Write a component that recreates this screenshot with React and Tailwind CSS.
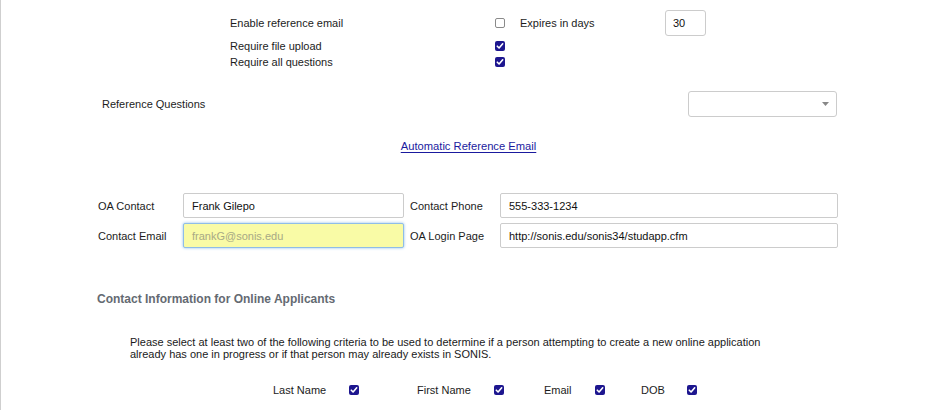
import React from "react";

function Check({ checked }) {
  if (checked) {
    return (
      <span className="inline-flex w-[10px] h-[10px] rounded-[2px] bg-[#1d168f] items-center justify-center shrink-0">
        <svg width="8" height="8" viewBox="0 0 8 8">
          <path d="M1.3 4.2 L3.1 6 L6.7 1.8" fill="none" stroke="#ffffff" strokeWidth="1.6" strokeLinecap="round" strokeLinejoin="round" />
        </svg>
      </span>
    );
  }
  return <span className="inline-block w-[10px] h-[10px] rounded-[2px] border border-[#8a8a8a] bg-white shrink-0" />;
}

export default function App() {
  return (
    <div
      className="w-[936px] h-[410px] bg-white border-l border-[#cfcfcf] overflow-hidden text-[11px] text-[#1c1c1c] leading-[14px]"
      style={{ fontFamily: '"Liberation Sans", Arial, sans-serif' }}
    >
      {/* Top options */}
      <div className="pt-[10px] pl-[229px]">
        <div className="flex items-center h-[26px]">
          <span className="w-[265px]">Enable reference email</span>
          <Check checked={false} />
          <span className="ml-[15px] w-[145px]">Expires in days</span>
          <div className="w-[41px] h-[26px] border border-[#cccccc] rounded-[3px] flex items-center pl-[7px] text-[#111]">30</div>
        </div>
        <div className="flex items-center h-[16px] mt-[2px]">
          <span className="w-[265px]">Require file upload</span>
          <Check checked={true} />
        </div>
        <div className="flex items-center h-[16px]">
          <span className="w-[265px]">Require all questions</span>
          <Check checked={true} />
        </div>
      </div>

      {/* Reference Questions */}
      <div className="flex items-center h-[26px] mt-[21px] pl-[101px]">
        <span className="w-[586px]">Reference Questions</span>
        <div className="w-[149px] h-[26px] border border-[#cccccc] rounded-[3px] bg-white flex items-center justify-end pr-[7px]">
          <svg width="7" height="4" viewBox="0 0 7 4">
            <path d="M0 0 L7 0 L3.5 4 Z" fill="#888888" />
          </svg>
        </div>
      </div>

      {/* Link */}
      <div className="flex justify-center mt-[22px]">
        <a className="text-[#1a1a9e] underline underline-offset-2 text-[11.2px]">Automatic Reference Email</a>
      </div>

      {/* Contact grid */}
      <div className="mt-[40px] pl-[97px] flex flex-col gap-[5px]">
        <div className="flex items-center">
          <span className="w-[85px]">OA Contact</span>
          <div className="w-[221px] h-[25px] border border-[#cccccc] rounded-[2px] flex items-center pl-[8px] text-[#111]">Frank Gilepo</div>
          <span className="ml-[6px] w-[90px]">Contact Phone</span>
          <div className="w-[338px] h-[25px] border border-[#cccccc] rounded-[2px] flex items-center pl-[8px] text-[#111]">555-333-1234</div>
        </div>
        <div className="flex items-center">
          <span className="w-[85px]">Contact Email</span>
          <div className="w-[221px] h-[25px] border border-[#8fbde8] rounded-[2px] bg-[#f9fba6] shadow-[0_0_3px_#8fbde8] flex items-center pl-[8px] text-[#a7a985]">frankG@sonis.edu</div>
          <span className="ml-[6px] w-[90px]">OA Login Page</span>
          <div className="w-[338px] h-[25px] border border-[#cccccc] rounded-[2px] flex items-center pl-[8px] text-[#111]">http://sonis.edu/sonis34/studapp.cfm</div>
        </div>
      </div>

      {/* Heading */}
      <div className="mt-[44px] pl-[96px] font-bold text-[12px] text-[#646a72]">Contact Information for Online Applicants</div>

      {/* Paragraph */}
      <p className="mt-[30px] pl-[129px] leading-[12px] text-[#1a1a1a]">
        Please select at least two of the following criteria to be used to determine if a person attempting to create a new online application
        <br />
        already has one in progress or if that person may already exists in SONIS.
      </p>

      {/* Criteria checkboxes */}
      <div className="mt-[22px] flex items-center h-[16px] pl-[272px]">
        <span className="w-[76px]">Last Name</span>
        <Check checked={true} />
        <span className="ml-[58px] w-[77px]">First Name</span>
        <Check checked={true} />
        <span className="ml-[40px] w-[51px]">Email</span>
        <Check checked={true} />
        <span className="ml-[36px] w-[46px]">DOB</span>
        <Check checked={true} />
      </div>
    </div>
  );
}
